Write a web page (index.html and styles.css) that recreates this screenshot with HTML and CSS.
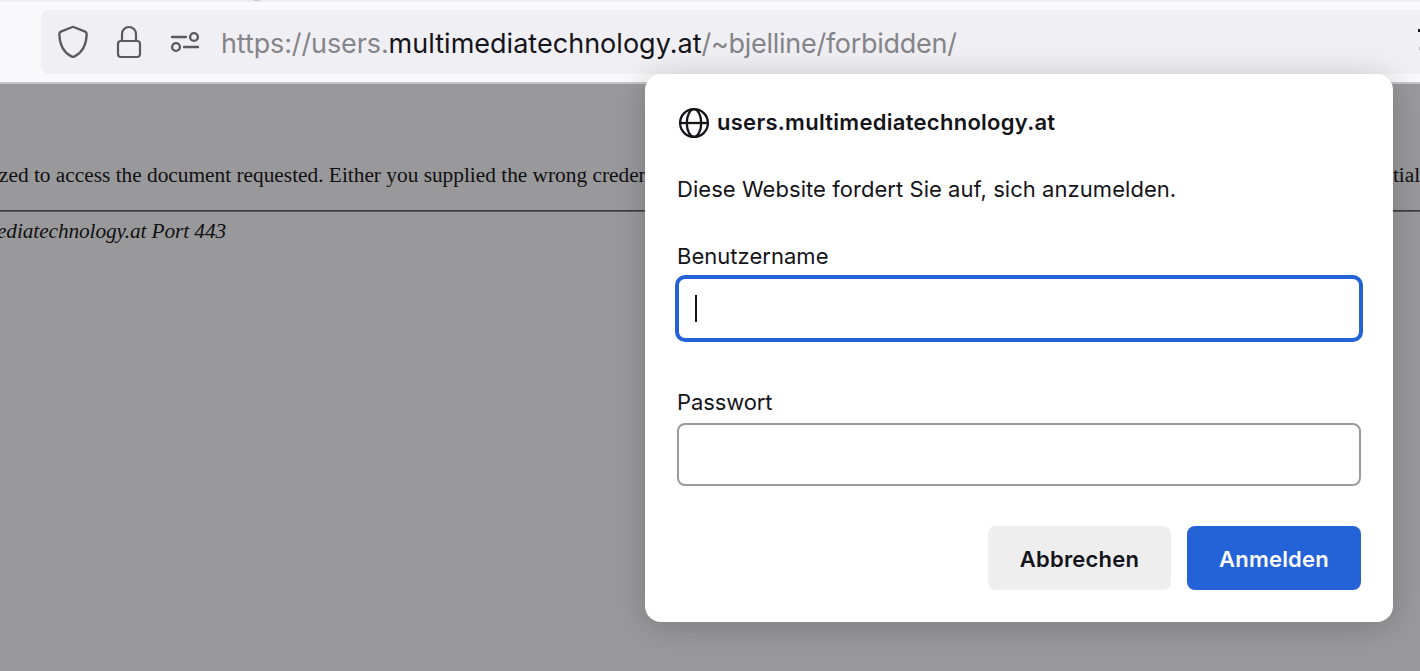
FILE: index.html
```html
<!DOCTYPE html>
<html lang="de">
<head>
<meta charset="utf-8">
<title>Anmeldung</title>
<link rel="stylesheet" href="styles.css">
</head>
<body>
<div class="browser">
  <header class="toolbar">
    <i class="tab-mark"></i>
    <div class="urlbar">
      <svg class="icon" width="32" height="36" viewBox="0 0 32 36" fill="none" stroke="#5b5a60" stroke-width="2.3" stroke-linejoin="round"><path d="M14.8 3.2 Q16 2.6 17.2 3.2 L28.2 7.6 Q29.8 8.4 29.7 10.3 C29.4 21.5 25.5 28.5 17.6 32.4 Q16 33.2 14.4 32.4 C6.5 28.5 2.6 21.5 2.3 10.3 Q2.2 8.4 3.8 7.6 Z"/></svg>
      <svg class="icon" width="26" height="36" viewBox="0 0 26 36" fill="none" stroke="#5b5a60" stroke-width="2.2"><rect x="2" y="17" width="22" height="16" rx="3"/><path d="M6 17 V10 A7 7 0 0 1 20 10 V17"/></svg>
      <svg class="icon sliders" width="30" height="36" viewBox="0 0 30 36" fill="none" stroke="#5b5a60" stroke-width="2.4" stroke-linecap="round"><path d="M2 13 H16 M14 23 H28"/><circle cx="24" cy="13" r="3.9"/><circle cx="6" cy="23" r="3.9"/></svg>
      <div class="url">https://users.<b>multimediatechnology.at</b><span class="path">/~bjelline/forbidden/</span></div>
      <i class="edge-mark"></i>
      <i class="edge-mark faint"></i>
    </div>
  </header>
  <main class="page">
    <p class="message">zed to access the document requested. Either you supplied the wrong credentials (e.g., bad password), or your browser doesn't understand how to supply the credentials required.</p>
    <hr class="rule">
    <address class="server">ediatechnology.at Port 443</address>
  </main>
  <form class="dialog">
    <div class="site">
      <svg width="32" height="32" viewBox="0 0 32 32" fill="none" stroke="#15141a" stroke-width="2.3"><circle cx="16" cy="16" r="13.9"/><ellipse cx="16" cy="16" rx="7.2" ry="13.9"/><path d="M2 16 H30"/></svg>
      <strong class="host">users.multimediatechnology.at</strong>
    </div>
    <p class="prompt">Diese Website fordert Sie auf, sich anzumelden.</p>
    <div class="label">Benutzername</div>
    <div class="field focused"><i class="caret"></i></div>
    <div class="label pass-label">Passwort</div>
    <div class="field"></div>
    <div class="actions">
      <button type="button" class="btn cancel">Abbrechen</button>
      <button type="button" class="btn submit">Anmelden</button>
    </div>
  </form>
</div>
</body>
</html>
```
FILE: styles.css
```css
* { box-sizing: border-box; }
body { margin: 0; font-family: Inter, "Liberation Sans", sans-serif; color: #15141a; }
.browser { position: relative; width: 1420px; height: 671px; overflow: hidden; background: #99999b; }
.toolbar { height: 84px; padding: 8px 0 0 41px; background: #f9f9fb; border-top: 2px solid #efeff1; border-bottom: 2px solid #c5c5c8; }
.tab-mark { position: absolute; left: 254px; top: 0; width: 6px; height: 1px; background: #c9c9cc; }
.urlbar { display: flex; align-items: center; width: 1400px; height: 64px; padding-left: 16px; background: #f0eff4; border-radius: 8px; }
.icon { flex: none; }
.icon + .icon { margin-left: 27px; }
.icon + .sliders { margin-left: 28px; }
.url { margin-left: 21px; padding-top: 3px; font-size: 27px; letter-spacing: -0.11px; white-space: nowrap; color: #858488; }
.url b { font-weight: 400; letter-spacing: 0.02px; color: #15141a; }
.path { letter-spacing: -0.28px; }
.edge-mark { position: absolute; left: 1418px; top: 29px; width: 2px; height: 3px; background: #15141a; }
.faint { left: 1419px; top: 47px; background: #b9b8bc; }
.page { padding-top: 78px; font-family: "Liberation Serif", serif; font-size: 21.33px; line-height: 26px; color: #101012; white-space: nowrap; }
.message { margin: 0 0 0 -1px; }
.rule { height: 2px; margin: 22px 0 6px; border: 0; border-top: 1px solid #3d3d40; background: #59595c; }
.server { margin-left: -3px; font-style: italic; letter-spacing: -0.1px; }
.dialog { position: absolute; left: 645px; top: 74px; width: 748px; height: 548px; padding: 32px; background: #fff; border-radius: 16px; box-shadow: 0 4px 32px rgba(12, 12, 13, 0.2); }
.site { display: flex; align-items: center; gap: 7px; height: 34px; padding-left: 1px; }
.host { margin-top: -2px; font-size: 22px; font-weight: 600; line-height: 34px; letter-spacing: 0.28px; }
.prompt { margin: 32px 0 33px; font-size: 22px; line-height: 34px; letter-spacing: 0.05px; }
.label { font-size: 22px; line-height: 34px; letter-spacing: 0.03px; }
.field { display: flex; align-items: center; height: 63px; border: 2px solid #9b9b9d; border-radius: 8px; }
.focused { height: 67px; margin: 2px -2px 0; padding-left: 16px; border: 4px solid #2462d8; border-radius: 10px; }
.caret { width: 2px; height: 27px; background: #15141a; }
.pass-label { margin: 43px 0 4px; letter-spacing: -0.1px; }
.actions { display: flex; justify-content: flex-end; gap: 16px; margin-top: 40px; }
.btn { height: 64px; padding: 2px 0 0; border: 0; border-radius: 8px; font: 600 22px Inter, sans-serif; letter-spacing: 0.2px; }
.cancel { width: 183px; background: #eeeeef; color: #15141a; }
.submit { width: 174px; background: #2462d8; color: #fbfbfe; }
```
